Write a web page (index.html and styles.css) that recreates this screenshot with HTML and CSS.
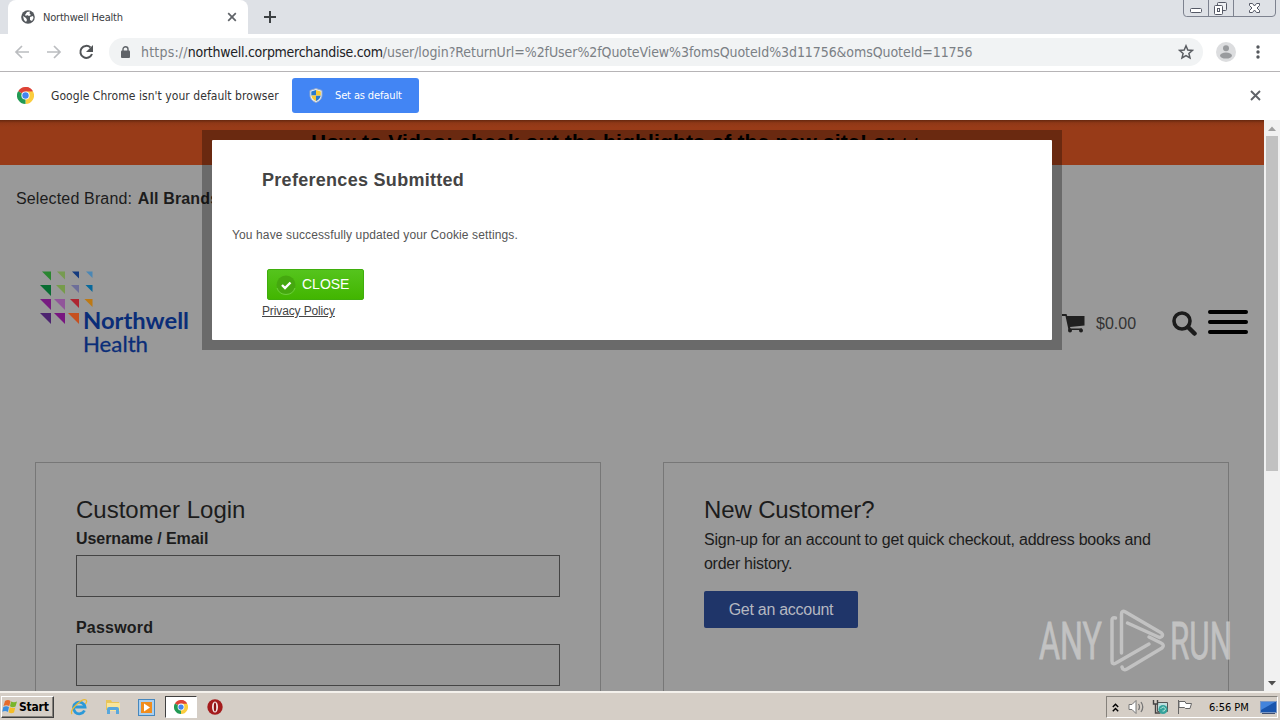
FILE: index.html
```html
<!DOCTYPE html>
<html lang="en">
<head>
<meta charset="utf-8">
<title>Northwell Health</title>
<link rel="stylesheet" href="styles.css">
</head>
<body>
<div class="screen">
  <header class="tabstrip">
    <div class="tab-prev"></div>
    <div class="tab">
      <svg class="globe" width="14" height="14" viewBox="0 0 14 14"><circle cx="7" cy="7" r="6.8" fill="#54585d"/><path d="M2 6l3 2 1 2-1 2-2-2zM6 2l3-.4-.5 2L10 5 8 6 6 5 5 6 4 5zM9 7l3-1 .5 2L11 11l-2-1z" fill="#fff"/></svg>
      <span class="tab-title"><span class="t-tab">Northwell Health</span></span>
      <svg width="10" height="10" viewBox="0 0 10 10"><path d="M1.200 1.200l7.600 7.600M8.800 1.200l-7.600 7.600" stroke="#5f6368" stroke-width="1.700"/></svg>
    </div>
    <svg class="newtab" width="12" height="12" viewBox="0 0 12 12"><path d="M6 0v12M0 6h12" stroke="#3c4043" stroke-width="2"/></svg>
    <div class="wincontrols">
      <svg width="112" height="17" viewBox="0 0 112 17"><path d="M.5-2V13q0 3.500 3 3.500H89q3.500 0 3.500-3.500V-2M25.500 0v16M50.500 0v16" fill="none" stroke="#7d828f"/><rect x="7.500" y="8.500" width="11" height="4" rx="1" fill="#fff" stroke="#555966"/><rect x="34.500" y="2.500" width="9" height="8" rx="1" fill="#eef0f3" stroke="#555966"/><rect x="31.500" y="5.500" width="8" height="9" rx="1" fill="#fff" stroke="#555966"/><rect x="34.500" y="8.500" width="2" height="3" fill="none" stroke="#555966"/><path d="M66.500 3.500h3l2 2.500 2-2.500h3v2l-2.500 2.500 2.500 2.500v2h-3l-2-2.500-2 2.500h-3v-2l2.500-2.500-2.500-2.500z" fill="#fff" stroke="#555966"/></svg>
    </div>
  </header>

  <div class="toolbar">
    <svg class="nav" width="82" height="18" viewBox="0 0 82 18"><g fill="none" stroke="#bbbdc0" stroke-width="1.700"><path d="M16 9H3M9 3L3 9l6 6"/><path d="M34 9h13M41 3l6 6-6 6"/></g><path d="M77.500 4.500A6 6 0 1 0 79 11" fill="none" stroke="#515457" stroke-width="2"/><path d="M80 2v7h-7z" fill="#515457"/></svg>
    <div class="omnibox">
      <svg width="9" height="12" viewBox="0 0 9 12"><rect y="4.500" width="9" height="7.500" rx="1" fill="#5f6368"/><path d="M2 5V3.200a2.500 2.500 0 0 1 5 0V5" fill="none" stroke="#5f6368" stroke-width="1.400"/></svg>
      <span class="url"><span class="u-scheme">https://</span><span class="u-host">northwell.corpmerchandise.com</span><span class="u-path">/user/login?ReturnUrl=%2fUser%2fQuoteView%3fomsQuoteId%3d11756&amp;omsQuoteId=11756</span></span>
      <svg class="star" width="16" height="16" viewBox="0 0 16 16"><path d="M8 1.800l1.800 4.200 4.600.4-3.500 3 1.100 4.500L8 11.500l-4 2.400 1.100-4.500-3.500-3 4.600-.4z" fill="none" stroke="#5a5d62" stroke-width="1.500"/></svg>
    </div>
    <svg width="20" height="20" viewBox="0 0 20 20"><circle cx="10" cy="10" r="10" fill="#dcdddf"/><circle cx="10" cy="6.200" r="3" fill="#999b9e"/><ellipse cx="10" cy="13.600" rx="6" ry="3" fill="#999b9e"/></svg>
    <svg class="kebab" width="4" height="14" viewBox="0 0 4 14"><circle cx="2" cy="2" r="1.700" fill="#55585d"/><circle cx="2" cy="7" r="1.700" fill="#55585d"/><circle cx="2" cy="12" r="1.700" fill="#55585d"/></svg>
  </div>

  <div class="infobar">
    <svg width="17" height="17" viewBox="0 0 24 24"><g id="chrome-mark"><path d="M12 12L1.600 6A12 12 0 0 1 22.400 6z" fill="#de4336"/><path d="M12 12L22.400 6A12 12 0 0 1 12 24z" fill="#fbcd3e"/><path d="M12 12L12 24A12 12 0 0 1 1.600 6z" fill="#229a54"/><path d="M12 6h10.400L17 14z" fill="#fbcd3e"/><path d="M12 6h10.400A12 12 0 0 0 12 0z" fill="#de4336"/><circle cx="12" cy="12" r="5.800" fill="#fff"/><circle cx="12" cy="12" r="4.500" fill="#4385ef"/></g></svg>
    <span class="info-text"><span class="t-info">Google Chrome isn't your default browser</span></span>
    <button class="default-btn">
      <svg width="14" height="15" viewBox="0 0 14 15"><path d="M7 .5l6 2V7c0 4-3 6.500-6 7.500C4 13.500 1 11 1 7V2.500z" fill="#e8f0ff" stroke="#96a9c8"/><path d="M7 2v5.500H2.300V3.400zM7 7.500h4.800c-.5 3-2.500 4.600-4.800 5.600z" fill="#2979ce"/><path d="M7 2v5.500h4.800V3.400zM7 7.500H2.300c.5 3 2.500 4.600 4.700 5.600z" fill="#f7c936"/></svg>
      <span class="t-default">Set as default</span>
    </button>
    <svg class="info-x" width="11" height="11" viewBox="0 0 11 11"><path d="M1 1l9 9M10 1l-9 9" stroke="#5f6368" stroke-width="1.900"/></svg>
  </div>

  <div class="viewport">
    <main class="page">
      <div class="banner"><span class="t-banner">How to Video: check out the highlights of the new site!</span><span class="arrows">or</span><span class="plus">t&nbsp;t</span></div>
      <div class="brand"><span class="t-brand">Selected Brand: <b>All Brands</b></span></div>
      <div class="masthead">
        <svg class="logo" width="152" height="84" viewBox="39 270 152 84">
          <path d="M42 271.500h9v9z" fill="#2a8630"/><path d="M57 271.500h8v8z" fill="#779b51"/><path d="M72 271.500h7v7z" fill="#143a7e"/><path d="M86 271.500h6.500v6.500z" fill="#4a87b5"/>
          <path d="M40 285h11v11z" fill="#096d32"/><path d="M56 285h9v9z" fill="#769b4b"/><path d="M71 285h8v8z" fill="#6d6e99"/><path d="M85.500 285h7v7z" fill="#08699c"/>
          <path d="M40 299h11v11z" fill="#771c81"/><path d="M54 299h11v11z" fill="#91559a"/><path d="M70 299h9v9z" fill="#ae2631"/><path d="M84.500 299h8v8z" fill="#be7913"/>
          <path d="M40 313h11v11z" fill="#4d2470"/><path d="M54 313h11v11z" fill="#781680"/><path d="M68 313h11v11z" fill="#c65020"/>
          <text class="lg-bold" x="83" y="328.500" textLength="106" lengthAdjust="spacingAndGlyphs">Northwell</text>
          <text class="lg-reg" x="83" y="351.500" textLength="65" lengthAdjust="spacingAndGlyphs">Health</text>
        </svg>
        <div class="tools">
          <svg class="cart" width="23" height="20" viewBox="0 0 23 20"><path d="M0 1h4.500l.7 2H22.500v9.500L8 14l.5 1.500H20V17H6.500L6 14.500 3.500 3H0z" fill="#202020"/><circle cx="8" cy="17.500" r="2" fill="#202020"/><circle cx="19" cy="17.500" r="2" fill="#202020"/></svg>
          <span class="price"><span class="t-price">$0.00</span></span>
          <svg class="search" width="25" height="25" viewBox="0 0 25 25"><circle cx="10" cy="10" r="8" fill="none" stroke="#1c1c1c" stroke-width="3.600"/><path d="M16 16l6.500 6.500" stroke="#1c1c1c" stroke-width="4.500" stroke-linecap="round"/></svg>
          <div class="burger"><i></i><i></i><i></i></div>
        </div>
      </div>
      <div class="cards">
        <section class="card">
          <h2><span class="t-cl">Customer Login</span></h2>
          <label class="first"><span class="t-user">Username / Email</span></label>
          <div class="field"></div>
          <label><span class="t-pass">Password</span></label>
          <div class="field"></div>
        </section>
        <section class="card">
          <h2><span class="t-nc">New Customer?</span></h2>
          <p><span class="t-p1">Sign-up for an account to get quick checkout, address books and</span><br><span class="t-p2">order history.</span></p>
          <button class="account"><span class="t-acc">Get an account</span></button>
        </section>
      </div>
    </main>
    <aside class="scrollbar">
      <svg width="8" height="5" viewBox="0 0 8 5"><path d="M0 5l4-4.500L8 5z" fill="#a0a0a0"/></svg>
      <div class="thumb"></div>
      <svg class="down" width="8" height="5" viewBox="0 0 8 5"><path d="M0 0h8L4 4.500z" fill="#4f4f4f"/></svg>
    </aside>
    <div class="dialog-frame">
      <div class="dialog">
        <h3><span class="t-pref">Preferences Submitted</span></h3>
        <p><span class="t-msg">You have successfully updated your Cookie settings.</span></p>
        <button class="close">
          <svg width="20" height="20" viewBox="0 0 20 20"><circle cx="10" cy="10" r="9.500" fill="#45a80f"/><path d="M1 13a9.500 9.500 0 0 0 18 0" fill="none" stroke="#6fd03f"/><path d="M6 10l3 3 5.500-5.500" fill="none" stroke="#fff" stroke-width="2.400"/></svg>
          <span class="t-close">CLOSE</span>
        </button>
        <a class="privacy"><span class="t-priv">Privacy Policy</span></a>
      </div>
    </div>
    <svg class="watermark" width="200" height="66" viewBox="1036 608 200 66">
      <g class="wm-text"><text x="1039" y="659" textLength="63" lengthAdjust="spacingAndGlyphs">ANY</text><text x="1170" y="659" textLength="62" lengthAdjust="spacingAndGlyphs">RUN</text></g>
      <g fill="none" stroke="#d0d0d0" stroke-width="3.500" stroke-linejoin="round" stroke-linecap="round"><path d="M1115.500 618q-3.500-1-3.500 2v41q0 4 4 2l33-19"/><path d="M1121.500 653V614q0-4 4-2l36 21q3 3-2 4.500l-32-14.500"/><path d="M1122 667q1 4 5 2l35-21q3-3-1-5l-12-6"/></g>
    </svg>
  </div>

  <footer class="taskbar">
    <div class="start">
      <svg width="16" height="16" viewBox="0 0 16 16"><path d="M3 2q3-2 5.500 0L7.300 7q-3-1.500-5.800 0z" fill="#e66b2c"/><path d="M9 2.500q3 1.500 6 0L13.500 7.500q-3 1.500-5.500-.2z" fill="#79b52b"/><path d="M1.300 8q3-1.500 5.700 0L5.800 13q-2.500-1.800-5.500-.2z" fill="#398ee0"/><path d="M7.800 8.300q3 1.500 5.500.2l-1.300 5q-3 1.500-5.400-.2z" fill="#f5bd26"/></svg>
      <span class="t-start">Start</span>
    </div>
    <div class="quick">
      <svg width="18" height="18" viewBox="0 0 18 18"><path d="M14.500 12.500A5.800 5.800 0 1 1 15 9H5" fill="none" stroke="#2b99d8" stroke-width="2.800"/><path d="M2 16C-1 12 12 0 16 2q1.500 1-.5 4" fill="none" stroke="#e9ba35" stroke-width="1.300"/></svg>
      <svg width="18" height="18" viewBox="0 0 18 18"><path d="M2 2h5l1 2h7v8H2z" fill="#e9c558"/><path d="M3 5h13v8H3z" fill="#f9e59a"/><path d="M3 16v-5q0-2 2-2h8q2 0 2 2v5h-3v-4H6v4z" fill="#58a7dc"/></svg>
      <svg width="17" height="17" viewBox="0 0 17 17"><rect x=".5" y=".5" width="16" height="16" fill="#a9cff0" stroke="#4687bd"/><rect x="3" y="3" width="11" height="11" fill="#f18d1d"/><path d="M6 4.500l6 4-6 4z" fill="#fff"/></svg>
      <div class="active-app"><svg width="14" height="14" viewBox="0 0 24 24"><use href="#chrome-mark"/></svg></div>
      <svg width="16" height="16" viewBox="0 0 16 16"><circle cx="8" cy="8" r="7.700" fill="#a41b1c"/><ellipse cx="8" cy="8" rx="3" ry="5.500" fill="#f5e9e9"/><ellipse cx="8" cy="8" rx="1.200" ry="4.500" fill="#8d1112"/></svg>
    </div>
    <div class="tray">
      <svg width="7" height="9" viewBox="0 0 7 9"><path d="M.8 4L3.500 1.200 6.200 4M.8 8.200l2.700-2.800 2.700 2.800" fill="none" stroke="#000" stroke-width="1.400"/></svg>
      <svg class="vol" width="17" height="14" viewBox="0 0 17 14"><path d="M1 4.500h3l4-4v13l-4-4H1z" fill="#fff" stroke="#777"/><path d="M10.500 4q2 3 0 6M13 2q3.500 5 0 10" fill="none" stroke="#777" stroke-width="1.300"/></svg>
      <svg class="net" width="17" height="16" viewBox="0 0 17 16"><path d="M5.500 3.500h10v9h-10z" fill="#bee0df" stroke="#555"/><path d="M1.500 1v4h4V1M3.500 5v9h5" fill="none" stroke="#444" stroke-width="1.400"/><circle cx="11" cy="10.500" r="4.500" fill="#35a39c"/><path d="M8.500 10q3-4 5 0-1 3-3 2" fill="none" stroke="#b9e7d9"/></svg>
      <svg class="flag" width="16" height="16" viewBox="0 0 16 16"><path d="M1.500 1v14M2 2.500h6l1 2h5.500L13 9.500H8.500l-1-1H2z" fill="#fff" stroke="#666"/></svg>
      <span class="clock"><span class="t-clock">6:56 PM</span></span>
      <svg width="17" height="13" viewBox="0 0 17 13"><rect x=".5" y=".5" width="16" height="11" fill="#1955ad" stroke="#7c98c4"/><path d="M1 1h14L1 9z" fill="#4384dc"/><path d="M2 12.500h13" stroke="#405071"/></svg>
    </div>
  </footer>
</div>
</body>
</html>
```
FILE: styles.css
```css
* { box-sizing: border-box; }
body { margin: 0; font-family: "Liberation Sans", Arial, sans-serif; }
svg { display: block; flex: none; }
h2, h3, p { margin: 0; font-weight: 400; }
button { border: 0; padding: 0; font-family: inherit; }
span { white-space: nowrap; }

.screen { width: 1280px; height: 720px; overflow: hidden; display: flex; flex-direction: column; background: #fff; }

.tabstrip { height: 34px; flex: none; background: #dee1e6; display: flex; align-items: flex-start; }
.tab-prev { width: 8px; height: 34px; background: #dee1e6; border-radius: 0 0 8px 0; }
.tab { width: 240px; height: 34px; background: #fff; border-radius: 8px 8px 0 0; display: flex; align-items: center; padding: 0 11px 0 13px; }
.tab-title { flex: 1; padding-left: 8px; font: 11px "DejaVu Sans Condensed", "DejaVu Sans", sans-serif; letter-spacing: -.2px; color: #3c4043; }
.newtab { margin: 11px 0 0 16px; }
.wincontrols { margin-left: auto; width: 97px; height: 17px; overflow: hidden; }

.toolbar { height: 38px; flex: none; border-bottom: 1px solid #b6b4b6; display: flex; align-items: center; padding: 0 20px 1px 0; }
.nav { margin-left: 13px; }
.omnibox { margin: 0 13px 0 14px; width: 1094px; height: 28px; border-radius: 14px; background: #f1f3f4; display: flex; align-items: center; padding: 0 9px 0 12px; }
.url { flex: 1; margin-left: 11px; font: 14px "DejaVu Sans Condensed", "DejaVu Sans", sans-serif; color: #7b8085; }
.u-scheme { letter-spacing: .2px; }
.u-host { letter-spacing: -.27px; color: #202124; }
.u-path { letter-spacing: -.07px; }
.kebab { margin-left: auto; }

.infobar { height: 48px; flex: none; display: flex; align-items: center; padding: 0 19px 1px 17px; }
.info-text { width: 241px; margin-left: 17px; font: 12px "DejaVu Sans Condensed", "DejaVu Sans", sans-serif; letter-spacing: .05px; color: #333; }
.default-btn { width: 127px; height: 35px; border-radius: 3px; background: #4285f4; color: #fff; display: flex; align-items: center; gap: 12px; padding-left: 17px; font: 11px "DejaVu Sans Condensed", "DejaVu Sans", sans-serif; letter-spacing: -.13px; }
.info-x { margin-left: auto; }

.viewport { height: 571px; flex: none; position: relative; display: flex; }
.page { width: 1264px; background: #999; overflow: hidden; }
.banner { height: 45px; background: linear-gradient(#66280f, #8f3817 3px, #983b18 7px); padding: 10px 0 0 311px; font-size: 21px; font-weight: 700; line-height: 24px; white-space: nowrap; color: #000; }
.t-banner { letter-spacing: .19px; }
.arrows { margin-left: 6px; }
.plus { margin-left: 8px; font-size: 16px; letter-spacing: 1px; }
.brand { height: 66px; padding: 22px 0 0 16px; font-size: 16px; line-height: 24px; letter-spacing: .15px; color: #1c1c1c; }
.brand b { margin-left: 1px; }
.masthead { height: 231px; padding: 39px 16px 0 39px; display: flex; justify-content: space-between; }
.logo, .watermark { overflow: visible; }
.lg-bold { font: 700 22px Lato, sans-serif; fill: #0a2d78; }
.lg-reg { font: 22px Lato, sans-serif; fill: #0a2d78; stroke: #0a2d78; stroke-width: .3; }
.tools { display: flex; align-items: flex-start; }
.cart { margin-top: 43px; }
.price { width: 76px; margin: 43px 0 0 11px; font-size: 16px; line-height: 22px; color: #333; }
.search { margin-top: 41px; }
.burger { margin: 40px 0 0 11px; width: 40px; display: grid; gap: 6px; }
.burger i { height: 4px; border-radius: 2px; background: #000; }

.cards { display: grid; grid-template-columns: 566px 566px; gap: 62px; padding-left: 35px; }
.card { height: 300px; border: 1px solid #777; padding: 32px 40px 0; color: #1c1c1c; }
.card h2 { font-size: 24px; line-height: 30px; }
.t-nc { letter-spacing: -.13px; }
.card label { display: block; font-size: 16px; font-weight: 700; line-height: 24px; padding: 19px 0 4px; }
.card label.first { padding: 2px 0 4px; }
.t-user { letter-spacing: -.07px; }
.t-pass { letter-spacing: .2px; }
.field { height: 42px; border: 1px solid #444; background: #969696; }
.card p { font-size: 16px; line-height: 24px; padding-top: 3px; }
.t-p1 { letter-spacing: -.21px; }
.t-p2 { letter-spacing: -.28px; }
.account { display: block; margin-top: 15px; width: 154px; height: 37px; border-radius: 2px; background: #1f3569; color: #b5b8c1; font-size: 16px; letter-spacing: -.28px; }

.scrollbar { width: 16px; background: #f1f1f1; display: flex; flex-direction: column; align-items: center; padding: 6px 0 5px; }
.thumb { width: 12px; height: 335px; margin-top: 5px; background: #c1c1c1; }
.down { margin-top: auto; }

.dialog-frame { position: absolute; left: 202px; top: 10px; width: 860px; height: 220px; padding: 10px; background: rgba(0,0,0,.3); }
.dialog { height: 200px; border-radius: 1px; background: #fff; color: #444; }
.dialog h3 { padding: 28px 0 0 50px; font-size: 18px; line-height: 24px; font-weight: 700; letter-spacing: .29px; }
.dialog p { padding: 35px 0 0 20px; font-size: 12px; line-height: 16px; letter-spacing: .12px; color: #555; }
.close { margin: 26px 0 0 55px; width: 97px; height: 31px; border: 1px solid #3fae0c; border-radius: 2px; background: linear-gradient(#55c41d, #42b500); color: #fff; display: flex; align-items: center; gap: 6px; padding-left: 8px; font-size: 14px; }
.t-close { padding-bottom: 2px; }
.privacy { display: block; margin: 3px 0 0 50px; font-size: 12px; line-height: 16px; letter-spacing: -.13px; text-decoration: underline; }

.watermark { position: absolute; left: 1036px; top: 488px; opacity: .75; }
.wm-text { font: 52px Roboto, sans-serif; fill: #d0d0d0; stroke: #d0d0d0; stroke-width: .8; }

.taskbar { height: 29px; flex: none; background: #d5cec6; border-top: 2px solid #f4f1ec; display: flex; align-items: center; padding-top: 1px; }
.start { width: 53px; height: 22px; margin-left: 1px; border: 1px solid; border-color: #fff #404040 #404040 #fff; box-shadow: inset -1px -1px #85817b; display: flex; align-items: center; gap: 1px; font: 700 12px "DejaVu Sans Condensed", sans-serif; letter-spacing: -.2px; color: #000; }
.quick { display: flex; align-items: center; margin-left: 16px; gap: 16px; }
.active-app { width: 32px; height: 22px; margin: 0 -6px; background: #fff; border: 1px solid; border-color: #404040 #fff #fff #404040; display: grid; place-items: center; }
.tray { width: 172px; height: 22px; margin: 0 2px 0 auto; border: 1px solid; border-color: #85817b #fff #fff #85817b; display: flex; align-items: center; padding-left: 5px; }
.vol { margin-left: 9px; }
.net { margin-left: 7px; }
.flag { margin-left: 8px; }
.clock { width: 51px; margin-left: 16px; font: 11px "DejaVu Sans Condensed", sans-serif; color: #000; }
```
